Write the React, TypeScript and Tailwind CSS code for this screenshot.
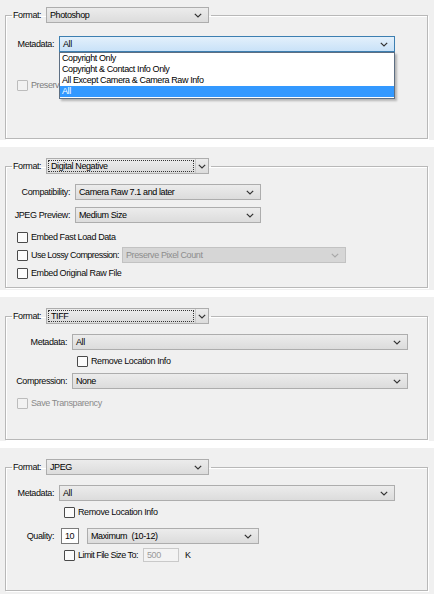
import React from "react";

const font = { fontFamily: '"Liberation Sans", Arial, sans-serif' };

function Chevron({ color = "#333" }: { color?: string }) {
  return (
    <svg width="8" height="5" viewBox="0 0 8 5" className="shrink-0">
      <polyline points="0.8,0.8 4,4 7.2,0.8" fill="none" stroke={color} strokeWidth="1.2" />
    </svg>
  );
}

type SelProps = {
  w: string;
  value: string;
  focus?: boolean;
  dotted?: boolean;
  disabled?: boolean;
  children?: React.ReactNode;
};

function Select({ w, value, focus, dotted, disabled, children }: SelProps) {
  let cls =
    "relative flex h-[16px] items-center border border-[#adadad] bg-gradient-to-b from-[#ececec] to-[#dcdcdc] text-black";
  if (focus)
    cls =
      "relative flex h-[16px] items-center border border-[#3c7fb1] bg-gradient-to-b from-[#e3f0fb] to-[#c9e2f8] text-black";
  if (disabled)
    cls =
      "relative flex h-[16px] items-center border border-[#c2c2c2] bg-[#d6d6d6] text-[#8d8d8d]";
  return (
    <div className={`${cls} ${w}`}>
      {dotted ? (
        <div className="mx-[1px] flex h-[12px] flex-1 items-center whitespace-nowrap border border-dotted border-[#333] pl-[2px]">
          {value}
        </div>
      ) : (
        <div className="flex-1 whitespace-pre pl-[3px]">{value}</div>
      )}
      <div
        className={
          dotted
            ? "flex h-full w-[13px] items-center justify-center border-l border-[#c8c8c8]"
            : "pr-[6px]"
        }
      >
        <Chevron color={disabled ? "#a8a8a8" : "#333"} />
      </div>
      {children}
    </div>
  );
}

function Check({ disabled }: { disabled?: boolean }) {
  return (
    <div
      className={
        disabled
          ? "h-[11px] w-[11px] shrink-0 rounded-[1px] border border-[#bcbcbc] bg-[#f2f2f2]"
          : "h-[11px] w-[11px] shrink-0 rounded-[1px] border border-[#4a4a4a] bg-[#fbfbfb]"
      }
    />
  );
}

function Legend({ value, dotted }: { value: string; dotted?: boolean }) {
  return (
    <legend className="ml-[6px] px-[1px]">
      <div className="flex h-[16px] items-center pr-[1px]">
        <span className="w-[28px] whitespace-nowrap">Format:</span>
        <div className="ml-[5px]">
          <Select w="w-[163px]" value={value} dotted={dotted} />
        </div>
      </div>
    </legend>
  );
}

const fs =
  "ml-[5px] mr-[6px] border border-[#b8b8b8] shadow-[inset_1px_1px_0_#fff,1px_1px_0_#fff]";

export default function App() {
  return (
    <div
      className="w-[434px] bg-white text-[9px] leading-none tracking-[-0.4px] text-[#0a0a0a]"
      style={font}
    >
      {/* Panel 1 */}
      <div className="h-[140px] bg-[#f0f0f0] pt-[7px]">
        <fieldset className={`${fs} h-[132px]`}>
          <Legend value="Photoshop" />
          <div className="mt-[13px] flex items-center">
            <div className="w-[48px] whitespace-nowrap text-right">Metadata:</div>
            <div className="ml-[5px]">
              <Select w="w-[336px]" value="All" focus>
                <div className="absolute left-[-1px] top-[15px] z-10 w-[336px] border border-[#5d6f83] bg-white pb-[1px] text-black shadow-[2px_2px_2px_rgba(0,0,0,0.25)]">
                  <div className="flex h-[11px] items-center whitespace-nowrap pl-[2px]">Copyright Only</div>
                  <div className="flex h-[11px] items-center whitespace-nowrap pl-[2px]">
                    Copyright &amp; Contact Info Only
                  </div>
                  <div className="flex h-[11px] items-center whitespace-nowrap pl-[2px]">
                    All Except Camera &amp; Camera Raw Info
                  </div>
                  <div className="flex h-[11px] items-center bg-[#3399ff] pl-[2px] text-white">All</div>
                </div>
              </Select>
            </div>
          </div>
          <div className="mt-[25px] flex h-[16px] items-center pl-[11px] text-[#7d7d7d]">
            <Check disabled />
            <span className="ml-[3px] w-[28px] overflow-hidden whitespace-nowrap">Preserve Layers</span>
          </div>
        </fieldset>
      </div>

      <div className="h-[7px]" />

      {/* Panel 2 */}
      <div className="h-[143px] bg-[#f0f0f0] pt-[11px]">
        <fieldset className={`${fs} h-[130px]`}>
          <Legend value="Digital Negative" dotted />
          <div className="mt-[10px] flex items-center">
            <div className="w-[64px] whitespace-nowrap text-right">Compatibility:</div>
            <div className="ml-[5px]">
              <Select w="w-[186px]" value="Camera Raw 7.1 and later" />
            </div>
          </div>
          <div className="mt-[7px] flex items-center">
            <div className="w-[64px] whitespace-nowrap text-right">JPEG Preview:</div>
            <div className="ml-[5px]">
              <Select w="w-[186px]" value="Medium Size" />
            </div>
          </div>
          <div className="mt-[6px] flex h-[16px] items-center pl-[11px]">
            <Check />
            <span className="ml-[3px] whitespace-nowrap">Embed Fast Load Data</span>
          </div>
          <div className="mt-[2px] flex h-[16px] items-center pl-[11px]">
            <Check />
            <span className="ml-[3px] w-[86px] whitespace-nowrap tracking-[-0.55px]">
              Use Lossy Compression:
            </span>
            <div className="ml-[5px]">
              <Select w="w-[224px]" value="Preserve Pixel Count" disabled />
            </div>
          </div>
          <div className="mt-[2px] flex h-[16px] items-center pl-[11px]">
            <Check />
            <span className="ml-[3px] whitespace-nowrap">Embed Original Raw File</span>
          </div>
        </fieldset>
      </div>

      <div className="h-[7px]" />

      {/* Panel 3 */}
      <div className="h-[144px] bg-[#f0f0f0] pt-[11px]">
        <fieldset className={`${fs} h-[132px]`}>
          <Legend value="TIFF" dotted />
          <div className="mt-[10px] flex items-center">
            <div className="w-[61px] whitespace-nowrap text-right">Metadata:</div>
            <div className="ml-[5px]">
              <Select w="w-[336px]" value="All" />
            </div>
          </div>
          <div className="mt-[3px] flex h-[16px] items-center pl-[71px]">
            <Check />
            <span className="ml-[3px] whitespace-nowrap">Remove Location Info</span>
          </div>
          <div className="mt-[4px] flex items-center">
            <div className="w-[61px] whitespace-nowrap text-right">Compression:</div>
            <div className="ml-[5px]">
              <Select w="w-[336px]" value="None" />
            </div>
          </div>
          <div className="mt-[6px] flex h-[16px] items-center pl-[11px] text-[#8a8a8a]">
            <Check disabled />
            <span className="ml-[3px] whitespace-nowrap">Save Transparency</span>
          </div>
        </fieldset>
      </div>

      <div className="h-[7px]" />

      {/* Panel 4 */}
      <div className="h-[146px] bg-[#f0f0f0] pt-[11px]">
        <fieldset className={`${fs} h-[132px]`}>
          <Legend value="JPEG" />
          <div className="mt-[10px] flex items-center">
            <div className="w-[48px] whitespace-nowrap text-right">Metadata:</div>
            <div className="ml-[5px]">
              <Select w="w-[336px]" value="All" />
            </div>
          </div>
          <div className="mt-[3px] flex h-[16px] items-center pl-[58px]">
            <Check />
            <span className="ml-[3px] whitespace-nowrap">Remove Location Info</span>
          </div>
          <div className="mt-[8px] flex items-center">
            <div className="w-[48px] whitespace-nowrap text-right">Quality:</div>
            <div className="ml-[7px] flex h-[16px] w-[18px] items-center border border-[#7a7a7a] bg-white pl-[3px]">
              10
            </div>
            <div className="ml-[8px]">
              <Select w="w-[172px]" value="Maximum  (10-12)" />
            </div>
          </div>
          <div className="mt-[3px] flex h-[16px] items-center pl-[58px]">
            <Check />
            <span className="ml-[3px] w-[60px] whitespace-nowrap tracking-[-0.55px]">Limit File Size To:</span>
            <div className="ml-[5px] flex h-[14px] w-[36px] items-center border border-[#c9c9c9] bg-[#f3f3f3] pl-[3px] text-[#9a9a9a]">
              500
            </div>
            <span className="ml-[6px]">K</span>
          </div>
        </fieldset>
      </div>
    </div>
  );
}
